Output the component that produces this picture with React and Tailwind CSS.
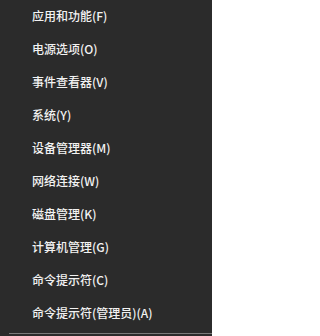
import React from 'react';

const items = [
  '应用和功能(F)',
  '电源选项(O)',
  '事件查看器(V)',
  '系统(Y)',
  '设备管理器(M)',
  '网络连接(W)',
  '磁盘管理(K)',
  '计算机管理(G)',
  '命令提示符(C)',
  '命令提示符(管理员)(A)',
];

const App = () => {
  return (
    <div
      className="w-[212px] h-[336px] bg-[#2b2b2b] overflow-hidden flex flex-col"
      style={{ fontFamily: '"Noto Sans CJK SC", "Liberation Sans", sans-serif' }}
    >
      {items.map((label) => (
        <div key={label} className="h-[33px] flex items-center pl-[32px] pb-px text-[12px] font-medium text-[#f2f2f2] leading-none">
          {label}
        </div>
      ))}
      <div className="mt-[3px] ml-[9px] h-px bg-[#7a7a7a]" />
    </div>
  );
};

export default App;
